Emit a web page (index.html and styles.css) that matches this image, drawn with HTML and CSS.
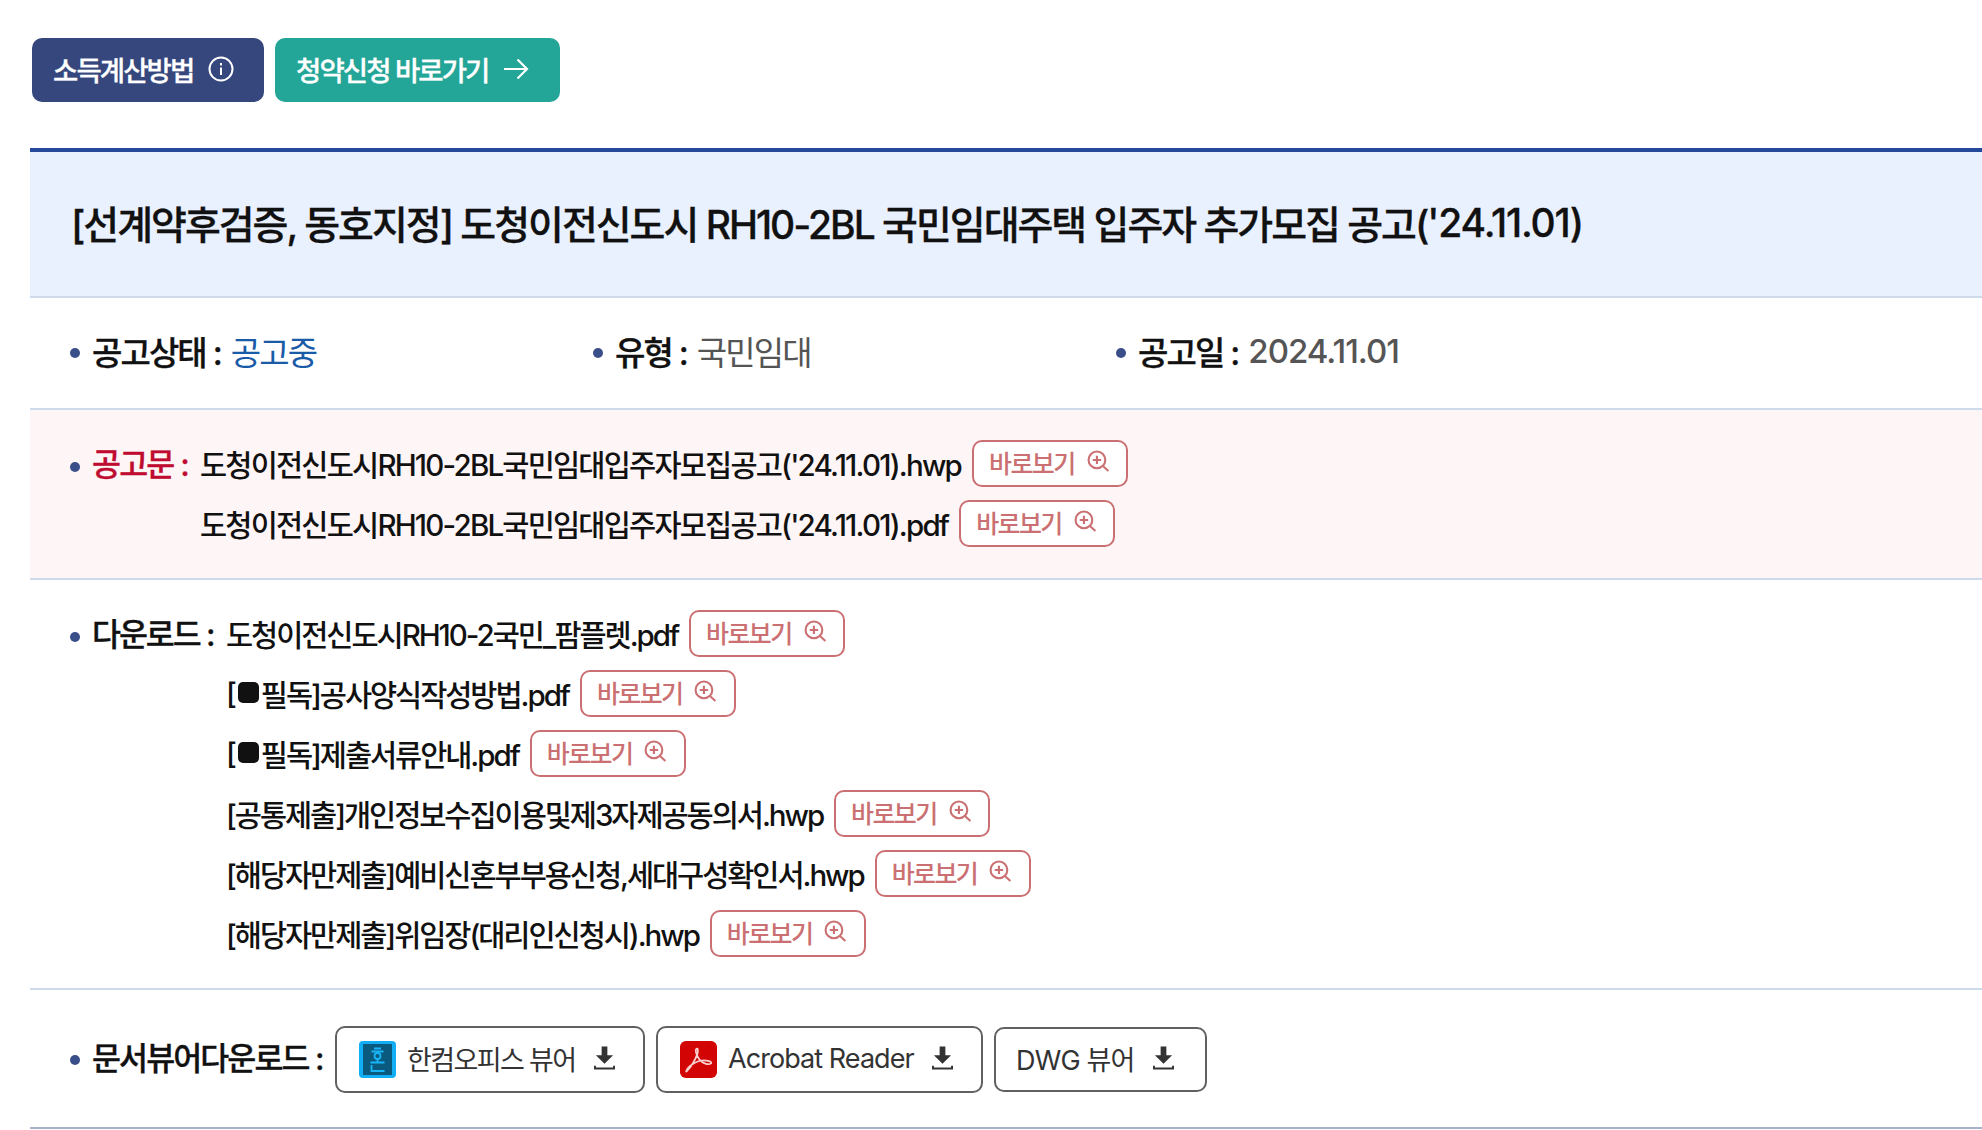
FILE: index.html
```html
<!DOCTYPE html>
<html lang="ko">
<head>
<meta charset="utf-8">
<title>공고</title>
<link rel="stylesheet" href="styles.css">
</head>
<body>
<div class="actions">
  <a class="act act-blue">소득계산방법
    <svg class="act-ic" viewBox="0 0 26 26" fill="none" stroke="#fff" stroke-width="2"><circle cx="13" cy="13" r="11.5"/><path d="M13 11.5v7.5M13 7v2.4"/></svg>
  </a>
  <a class="act act-green">청약신청 바로가기
    <svg class="act-ic" viewBox="0 0 26 26" fill="none" stroke="#fff" stroke-width="2.2"><path d="M1 13h23M14.500 3.500L24 13l-9.500 9.500"/></svg>
  </a>
</div>
<main class="sheet">
  <h1 class="title">[선계약후검증, 동호지정] 도청이전신도시 RH10-2BL 국민임대주택 입주자 추가모집 공고(<span class="title-date">'24.11.01)</span></h1>
  <section class="info">
    <div class="info-item"><span class="dot"></span><b>공고상태 :</b><span class="st-blue">공고중</span></div>
    <div class="info-item"><span class="dot"></span><b>유형 :</b><span class="st-gray">국민임대</span></div>
    <div class="info-item"><span class="dot"></span><b>공고일 :</b><span class="st-gray st-date">2024.11.01</span></div>
  </section>
  <section class="block pink">
    <span class="dot"></span>
    <b class="label label-red">공고문 :</b>
    <ul class="files">
      <li>도청이전신도시RH10-2BL국민임대입주자모집공고('24.11.01).hwp<a class="view">바로보기<svg class="mag" viewBox="0 0 22 22" fill="none" stroke="#cb7072" stroke-width="2"><circle cx="9.500" cy="9.500" r="8"/><path d="M9.500 5.500v8M5.500 9.500h8M15.500 15.500l5 4.500"/></svg></a></li>
      <li>도청이전신도시RH10-2BL국민임대입주자모집공고('24.11.01).pdf<a class="view">바로보기<svg class="mag" viewBox="0 0 22 22" fill="none" stroke="#cb7072" stroke-width="2"><circle cx="9.500" cy="9.500" r="8"/><path d="M9.500 5.500v8M5.500 9.500h8M15.500 15.500l5 4.500"/></svg></a></li>
    </ul>
  </section>
  <section class="block plain">
    <span class="dot"></span>
    <b class="label label-dl">다운로드 :</b>
    <ul class="files">
      <li>도청이전신도시RH10-2국민_팜플렛.pdf<a class="view">바로보기<svg class="mag" viewBox="0 0 22 22" fill="none" stroke="#cb7072" stroke-width="2"><circle cx="9.500" cy="9.500" r="8"/><path d="M9.500 5.500v8M5.500 9.500h8M15.500 15.500l5 4.500"/></svg></a></li>
      <li>[<span class="sq"></span>필독]공사양식작성방법.pdf<a class="view">바로보기<svg class="mag" viewBox="0 0 22 22" fill="none" stroke="#cb7072" stroke-width="2"><circle cx="9.500" cy="9.500" r="8"/><path d="M9.500 5.500v8M5.500 9.500h8M15.500 15.500l5 4.500"/></svg></a></li>
      <li>[<span class="sq"></span>필독]제출서류안내.pdf<a class="view">바로보기<svg class="mag" viewBox="0 0 22 22" fill="none" stroke="#cb7072" stroke-width="2"><circle cx="9.500" cy="9.500" r="8"/><path d="M9.500 5.500v8M5.500 9.500h8M15.500 15.500l5 4.500"/></svg></a></li>
      <li>[공통제출]개인정보수집이용및제3자제공동의서.hwp<a class="view">바로보기<svg class="mag" viewBox="0 0 22 22" fill="none" stroke="#cb7072" stroke-width="2"><circle cx="9.500" cy="9.500" r="8"/><path d="M9.500 5.500v8M5.500 9.500h8M15.500 15.500l5 4.500"/></svg></a></li>
      <li>[해당자만제출]예비신혼부부용신청,세대구성확인서.hwp<a class="view">바로보기<svg class="mag" viewBox="0 0 22 22" fill="none" stroke="#cb7072" stroke-width="2"><circle cx="9.500" cy="9.500" r="8"/><path d="M9.500 5.500v8M5.500 9.500h8M15.500 15.500l5 4.500"/></svg></a></li>
      <li>[해당자만제출]위임장(대리인신청시).hwp<a class="view">바로보기<svg class="mag" viewBox="0 0 22 22" fill="none" stroke="#cb7072" stroke-width="2"><circle cx="9.500" cy="9.500" r="8"/><path d="M9.500 5.500v8M5.500 9.500h8M15.500 15.500l5 4.500"/></svg></a></li>
    </ul>
  </section>
  <section class="viewers">
    <span class="dot"></span>
    <b class="label label-viewer">문서뷰어다운로드 :</b>
    <a class="vbtn vbtn-hancom">
      <svg class="vlogo" viewBox="0 0 37 37"><rect width="37" height="37" rx="4" fill="#12aef5"/><rect x="4" y="3" width="29" height="31" fill="#0a5a80"/><path d="M15 7.500h7M12.500 10.500h12M18.500 18v3.500M11.500 21.500h14M12.500 24v6h13" fill="none" stroke="#19b4f5" stroke-width="1.800"/><circle cx="18.500" cy="15" r="3" fill="none" stroke="#19b4f5" stroke-width="1.800"/></svg>
      한컴오피스 뷰어
      <svg class="dl" viewBox="0 0 22 24" fill="#333"><path d="M8 0h6v9h6l-9 9-9-9h6z"/><path d="M0 20h2v2h18v-2h2v4H0z"/></svg>
    </a>
    <a class="vbtn vbtn-acrobat">
      <svg class="vlogo" viewBox="0 0 38 38"><rect width="38" height="38" rx="6" fill="#d30404"/><path d="M7 31C11 27 15 21 18 13C19 9 18 7 17 8C15 9 17 15 20 19C23 23 29 25 32 23C33 21 28 20 24 20C18 20 11 24 8 28C6 31 6 32 7 31z" fill="none" stroke="#f8cfcf" stroke-width="1.800"/></svg>
      Acrobat Reader
      <svg class="dl" viewBox="0 0 22 24" fill="#333"><path d="M8 0h6v9h6l-9 9-9-9h6z"/><path d="M0 20h2v2h18v-2h2v4H0z"/></svg>
    </a>
    <a class="vbtn vbtn-dwg">
      DWG 뷰어
      <svg class="dl" viewBox="0 0 22 24" fill="#333"><path d="M8 0h6v9h6l-9 9-9-9h6z"/><path d="M0 20h2v2h18v-2h2v4H0z"/></svg>
    </a>
  </section>
</main>
</body>
</html>
```
FILE: styles.css
```css
* { box-sizing: border-box; }
html, body { margin: 0; padding: 0; }
body {
  background: #fff;
  color: #111;
  font-family: Inter, "Noto Sans CJK KR", sans-serif;
  font-size: 29.5px;
  letter-spacing: -0.065em;
  overflow: hidden;
  height: 1130px;
}
ul { list-style: none; margin: 0; padding: 0; }
.actions { display: flex; gap: 11px; padding: 38px 0 0 32px; height: 148px; }
.act {
  display: flex; align-items: center; height: 64px; border-radius: 10px;
  color: #fff; font-size: 27.5px; font-weight: 500; padding: 0 21px 2px;
  -webkit-text-stroke: 0.3px #fff;
}
.act-blue { background: #35477d; width: 232px; }
.act-green { background: #23a597; width: 285px; }
.act-ic { width: 26px; height: 26px; margin-left: 15px; flex: none; }
.sheet { margin-left: 30px; border-top: 4px solid #254a9c; }
.title {
  margin: 0; height: 146px; display: flex; align-items: center; padding: 0 0 4px 41px;
  background: #e9f0fe; border-bottom: 2px solid #cfdbeb;
  font-size: 39px; font-weight: 500; color: #111; letter-spacing: -0.052em;
  -webkit-text-stroke: 0.3px #111;
}
.title-date { letter-spacing: -0.03em; }
.dot { flex: none; width: 10px; height: 10px; border-radius: 50%; background: #3a4f8a; margin-right: 12px; }
b { font-weight: 500; -webkit-text-stroke: 0.3px currentColor; }
.info { display: flex; height: 112px; align-items: center; padding: 0 0 4px 40px; border-bottom: 2px solid #cfdbeb; font-size: 33px; }
.info-item { width: 523px; display: flex; align-items: center; white-space: pre; }
.info-item .dot { margin-top: 4px; }
.st-blue { color: #1a5ba8; margin-left: 10px; }
.st-gray { color: #555; margin-left: 10px; }
.st-date { letter-spacing: -0.03em; font-weight: 500; }
.block { display: flex; align-items: flex-start; padding-left: 40px; border-bottom: 2px solid #cfdbeb; }
.block > .dot { margin-top: 22px; }
.pink { background: #fef5f6; padding-top: 30px; height: 170px; letter-spacing: -0.061em; }
.plain { padding-top: 30px; height: 410px; letter-spacing: -0.0695em; }
.label { flex: none; font-size: 31.5px; line-height: 49px; white-space: nowrap; }
.label-red { color: #c00b30; width: 108px; }
.label-dl { width: 134px; }
.label-viewer { width: 243px; margin-top: -2px; }
.files li { display: flex; align-items: center; height: 47px; margin-bottom: 13px; padding-bottom: 2px; color: #111; white-space: nowrap; font-weight: 500; }
.sq { display: inline-block; width: 21px; height: 21px; border-radius: 5px; background: #111; margin: 0 2px 0 3px; }
.view {
  display: flex; align-items: center; width: 156px; height: 47px; margin: 0 0 -2px 11px; padding: 0 0 3px 15px;
  border: 2px solid #cb7072; border-radius: 10px; background: #fff;
  color: #cb7072; font-size: 25px; font-weight: 500; letter-spacing: -0.065em;
}
.mag { width: 23px; height: 23px; margin-left: 12px; flex: none; margin-top: -2px; }
.viewers { display: flex; align-items: center; height: 139px; padding: 2px 0 0 40px; border-bottom: 2px solid #a7b2c8; }
.vbtn {
  display: flex; align-items: center; height: 67px; margin-right: 11px; padding: 0 0 2px 22px;
  border: 2px solid #616161; border-radius: 10px; color: #333; font-size: 27px; font-weight: 400;
  letter-spacing: -0.06em;
}
.vbtn-hancom { width: 310px; }
.vbtn-acrobat { width: 327px; letter-spacing: -0.035em; }
.vbtn-dwg { width: 213px; height: 65px; padding-left: 20px; letter-spacing: -0.03em; }
.vlogo { width: 37px; height: 37px; margin: 2px 11px 0 0; flex: none; }
.dl { width: 21px; height: 24px; margin: -2px 0 0 18px; flex: none; }
```
